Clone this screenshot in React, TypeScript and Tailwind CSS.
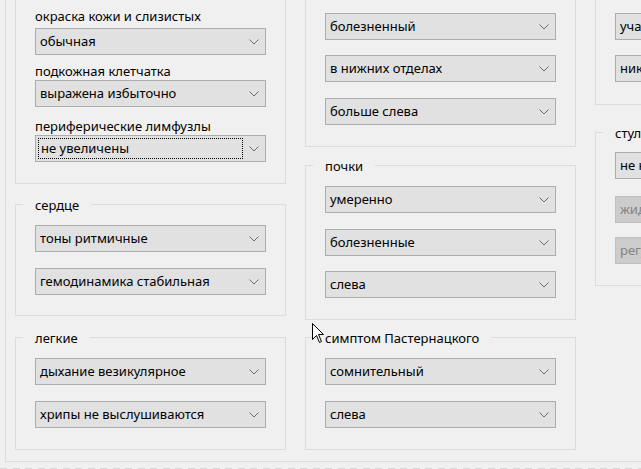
import React from "react";

const font = { fontFamily: '"Noto Sans", "Open Sans", sans-serif' };

function Chevron() {
  return (
    <svg width="10" height="6" viewBox="0 0 10 6" className="shrink-0">
      <path d="M0.5 0.5 L5 5 L9.5 0.5" fill="none" stroke="#6d6d6d" strokeWidth="1" />
    </svg>
  );
}

function Combo({ value, mt, disabled, focused }: { value: string; mt: string; disabled?: boolean; focused?: boolean }) {
  return (
    <div
      className={`${mt} mx-[19px] h-[27px] w-[231px] flex items-center border pr-[6px] ${
        disabled ? "bg-[#cccccc] border-[#bfbfbf] text-[#838383]" : "bg-[#e1e1e1] border-[#adadad] text-black"
      }`}
    >
      {focused ? (
        <div className="ml-[2px] h-[21px] w-[205px] flex items-center pl-[2px] pt-[1px] border border-dotted border-black">
          {value}
        </div>
      ) : (
        <span className="pl-[4px] pt-[1px] whitespace-nowrap overflow-hidden">{value}</span>
      )}
      <div className="ml-auto">
        <Chevron />
      </div>
    </div>
  );
}

function Label({ text, mt }: { text: string; mt: string }) {
  return <div className={`${mt} ml-[19px] leading-[16px] whitespace-nowrap`}>{text}</div>;
}

function Group({ title, mt, pb, children }: { title?: string; mt: string; pb: string; children: React.ReactNode }) {
  return (
    <div className={`relative ${mt} ${pb} w-[271px] shrink-0 border border-[#dcdcdc]`}>
      {title && (
        <span className="absolute -top-[8px] left-[7px] bg-[#f0f0f0] px-[12px] leading-[16px] whitespace-nowrap">
          {title}
        </span>
      )}
      {children}
    </div>
  );
}

export default function App() {
  return (
    <div className="w-[641px] h-[469px] overflow-hidden bg-[#f0f0f0] text-[13px] text-black relative" style={font}>
      <div className="-mt-[20px] ml-[5px] w-[700px] border-l border-t border-b border-[#dcdcdc] pl-[9px] pt-[9px] pb-[11px] flex items-start gap-[19px]">
        {/* left column */}
        <div className="flex flex-col">
          <Group mt="mt-0" pb="pb-[21px]">
            <Label text="окраска кожи и слизистых" mt="mt-[17px]" />
            <Combo value="обычная" mt="mt-[4px]" />
            <Label text="подкожная клетчатка" mt="mt-[8px]" />
            <Combo value="выражена избыточно" mt="mt-[1px]" />
            <Label text="периферические лимфузлы" mt="mt-[11px]" />
            <Combo value="не увеличены" mt="mt-[1px]" focused />
          </Group>
          <Group title="сердце" mt="mt-[20px]" pb="pb-[20px]">
            <Combo value="тоны ритмичные" mt="mt-[20px]" />
            <Combo value="гемодинамика стабильная" mt="mt-[16px]" />
          </Group>
          <Group title="легкие" mt="mt-[21px]" pb="pb-[21px]">
            <Combo value="дыхание везикулярное" mt="mt-[20px]" />
            <Combo value="хрипы не выслушиваются" mt="mt-[16px]" />
          </Group>
        </div>

        {/* middle column */}
        <div className="flex flex-col">
          <Group mt="mt-0" pb="pb-[21px]">
            <Combo value="болезненный" mt="mt-[22px]" />
            <Combo value="в нижних отделах" mt="mt-[15px]" />
            <Combo value="больше слева" mt="mt-[16px]" />
          </Group>
          <Group title="почки" mt="mt-[18px]" pb="pb-[21px]">
            <Combo value="умеренно" mt="mt-[20px]" />
            <Combo value="болезненные" mt="mt-[16px]" />
            <Combo value="слева" mt="mt-[15px]" />
          </Group>
          <Group title="симптом Пастернацкого" mt="mt-[17px]" pb="pb-[21px]">
            <Combo value="сомнительный" mt="mt-[20px]" />
            <Combo value="слева" mt="mt-[16px]" />
          </Group>
        </div>

        {/* right column, cut off by the window edge */}
        <div className="flex flex-col">
          <Group mt="mt-0" pb="pb-[22px]">
            <Combo value="участвует в дыхании" mt="mt-[22px]" />
            <Combo value="никаких изменений" mt="mt-[15px]" />
          </Group>
          <Group title="стул" mt="mt-[27px]" pb="pb-[21px]">
            <Combo value="не нарушен" mt="mt-[19px]" />
            <Combo value="жидкий" mt="mt-[17px]" disabled />
            <Combo value="регулярный" mt="mt-[14px]" disabled />
          </Group>
        </div>
      </div>

      <div className="mt-[6px] h-px w-full bg-[repeating-linear-gradient(90deg,#d6d6d6_0px,#d6d6d6_7px,transparent_7px,transparent_12.5px)]" />

      {/* mouse pointer */}
      <svg className="absolute left-[312px] top-[323px]" width="13" height="21" viewBox="0 0 13 21">
        <path d="M0.5 0.5 L0.5 16.5 L4.5 12.5 L7.5 19.5 L9.5 18.5 L6.5 11.5 L11.5 11.5 Z" fill="#fff" stroke="#000" strokeWidth="1" strokeLinejoin="miter" />
      </svg>
    </div>
  );
}
